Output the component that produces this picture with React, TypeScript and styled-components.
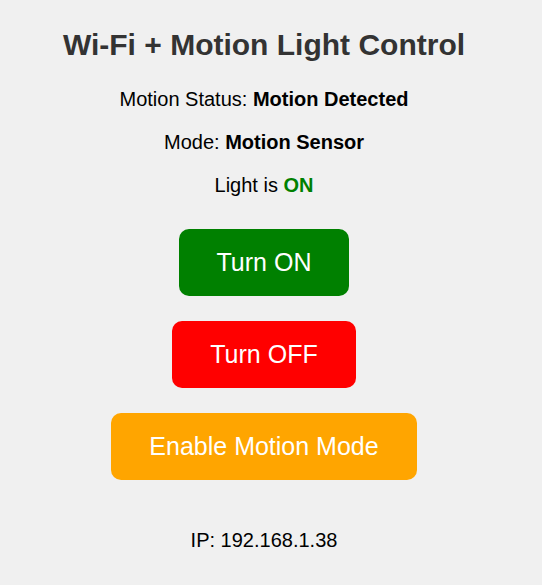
import React from "react";
import styled, { createGlobalStyle } from "styled-components";

const Global = createGlobalStyle`
  html, body { margin: 0; padding: 0; background: #f0f0f0; }
  body { font-family: "Liberation Sans", Arial, sans-serif; }
`;

const Page = styled.main`
  width: 528px;
  display: flex;
  flex-direction: column;
  align-items: center;
  text-align: center;
  padding-top: 28px;
`;

const Title = styled.h1`
  margin: 0 0 26px;
  font-size: 30px;
  line-height: 34px;
  font-weight: bold;
  color: #333;
`;

const Line = styled.p`
  margin: 0 0 20px;
  font-size: 20px;
  line-height: 23px;
  color: #000;
`;

const Value = styled.b<{ $color?: string }>`
  color: ${(p) => p.$color || "#000"};
`;

const Buttons = styled.div`
  margin-top: 12px;
  display: flex;
  flex-direction: column;
  align-items: center;
  gap: 25px;
`;

const Button = styled.button<{ $bg: string }>`
  border: none;
  border-radius: 10px;
  background: ${(p) => p.$bg};
  color: #fff;
  font-family: "Liberation Sans", Arial, sans-serif;
  font-size: 25px;
  line-height: 29px;
  padding: 19px 38px;
  cursor: pointer;
`;

const Ip = styled.p`
  margin: 49px 0 0;
  font-size: 20px;
  line-height: 23px;
`;

export default function App() {
  return (
    <>
      <Global />
      <Page>
        <Title>Wi-Fi + Motion Light Control</Title>
        <Line>
          Motion Status: <Value>Motion Detected</Value>
        </Line>
        <Line>
          Mode: <Value>Motion Sensor</Value>
        </Line>
        <Line>
          Light is <Value $color="green">ON</Value>
        </Line>
        <Buttons>
          <Button $bg="green">Turn ON</Button>
          <Button $bg="red">Turn OFF</Button>
          <Button $bg="orange">Enable Motion Mode</Button>
        </Buttons>
        <Ip>IP: 192.168.1.38</Ip>
      </Page>
    </>
  );
}
